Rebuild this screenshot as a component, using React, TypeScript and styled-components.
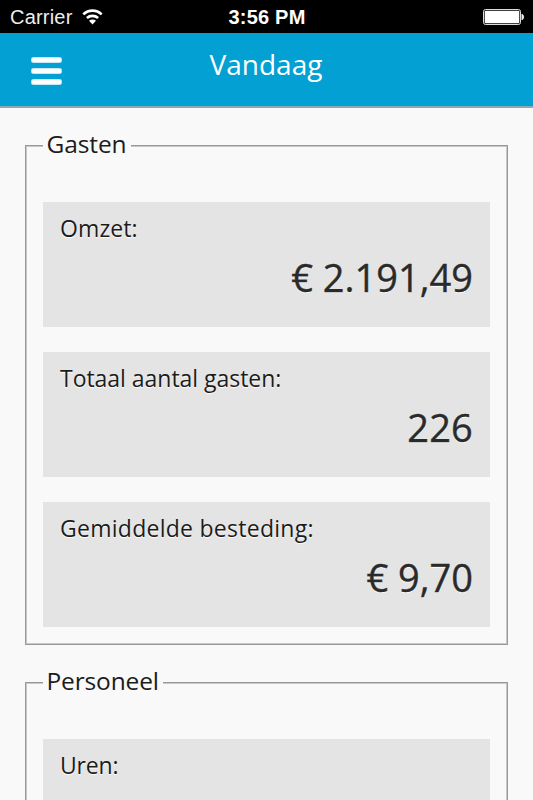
import React from "react";
import styled, { createGlobalStyle } from "styled-components";

const GlobalStyle = createGlobalStyle`
  * { box-sizing: border-box; }
  html, body { margin: 0; height: 100%; overflow: hidden; background: #f9f9f9; }
`;

const Screen = styled.div`
  width: 533px;
  height: 800px;
  overflow: hidden;
  background: #f9f9f9;
  color: #1c1c1c;
  font-family: "Open Sans", "Noto Sans", sans-serif;
`;

const StatusBar = styled.div`
  display: grid;
  grid-template-columns: 1fr auto 1fr;
  align-items: center;
  height: 33px;
  padding: 1px 9px 0 10px;
  background: #000;
  color: #fff;
  font: 20px/32px "Liberation Sans", Arial, sans-serif;
`;

const Carrier = styled.div`
  display: flex;
  align-items: center;
  gap: 9px;
  color: #eee;
  letter-spacing: 0.2px;
`;

const Clock = styled.div`
  font-weight: 700;
  font-size: 20px;
  letter-spacing: 0.2px;
`;

const Power = styled.div`
  display: flex;
  justify-content: flex-end;
`;

const Header = styled.header`
  display: grid;
  grid-template-columns: 80px 1fr 80px;
  height: 75px;
  padding: 0 1px 0 0;
  background: #02a0d3;
  border-bottom: 2px solid #8fa6b4;
`;

const MenuButton = styled.button`
  display: flex;
  flex-direction: column;
  gap: 5px;
  padding: 24px 0 0 31px;
  border: 0;
  background: none;
`;

const MenuLine = styled.span`
  width: 31px;
  height: 6px;
  border-radius: 3px;
  background: #fff;
  box-shadow: inset 0 0 1px 0.5px #8dd3ea;
`;

const Title = styled.h1`
  margin: 0;
  color: #fff;
  text-align: center;
  font-size: 28px;
  font-weight: 400;
  line-height: 62px;
`;

const Content = styled.main`
  display: flex;
  flex-direction: column;
  gap: 20px;
  padding: 20px 25px 0;
`;

const Group = styled.fieldset`
  min-width: 0;
  margin: 0;
  padding: 40px 17px 17px;
  border: 1px solid #999;
  box-shadow: inset 0 0 0 1px #c8c8c8;
`;

const Legend = styled.legend<{ $width: number; $spacing: number }>`
  width: ${(p) => p.$width}px;
  height: 34px;
  padding: 0 0 0 3.5px;
  background: #f9f9f9;
  font-size: 24.5px;
  line-height: 32px;
  white-space: nowrap;
  letter-spacing: ${(p) => p.$spacing}px;
`;

const Cards = styled.div`
  display: flex;
  flex-direction: column;
  gap: 25px;
`;

const Card = styled.section`
  height: 125px;
  padding: 9px 17px;
  background: #e4e4e4;
  text-shadow: 0 1px 1px #fff;
`;

const Label = styled.div<{ $spacing: number }>`
  height: 34px;
  font-size: 23px;
  line-height: 34px;
  white-space: nowrap;
  letter-spacing: ${(p) => p.$spacing}px;
`;

const Value = styled.div<{ $spacing: number }>`
  height: 64px;
  font-size: 38px;
  line-height: 64px;
  text-align: right;
  white-space: nowrap;
  color: #2a2a2a;
  -webkit-text-stroke: 0.4px #2a2a2a;
  letter-spacing: ${(p) => p.$spacing}px;
`;

const WifiIcon = () => (
  <svg width="21" height="16" viewBox="0 0 21 16">
    <path d="M1.3 5.4C6.6.3 14.4.3 19.7 5.4" fill="none" stroke="#fff" strokeWidth="2.6" />
    <path d="M4.9 9C8 6.2 13 6.2 16.1 9" fill="none" stroke="#fff" strokeWidth="2.6" />
    <path d="M7 11.8c2-1.800 5-1.800 7 0L10.500 15.500z" fill="#fff" />
  </svg>
);

const BatteryIcon = () => (
  <svg width="41" height="16" viewBox="0 0 41 16">
    <rect x=".5" y=".5" width="37" height="15" rx="2" fill="none" stroke="#ddd" />
    <rect x="1.700" y="1.700" width="34.600" height="12.600" rx=".8" fill="#fff" />
    <path d="M38.500 5h1q1.500 1 1.500 3t-1.500 3h-1z" fill="#eee" />
  </svg>
);

interface Item { label: string; value: string; labelSpacing: number; valueSpacing: number }
interface Section { title: string; width: number; spacing: number; items: Item[] }

const sections: Section[] = [
  {
    title: "Gasten", width: 88, spacing: -0.1,
    items: [
      { label: "Omzet:", value: "€ 2.191,49", labelSpacing: 0.1, valueSpacing: 0 },
      { label: "Totaal aantal gasten:", value: "226", labelSpacing: -0.03, valueSpacing: 0.2 },
      { label: "Gemiddelde besteding:", value: "€ 9,70", labelSpacing: 0.27, valueSpacing: 0 },
    ],
  },
  {
    title: "Personeel", width: 120, spacing: -0.15,
    items: [{ label: "Uren:", value: "", labelSpacing: -0.2, valueSpacing: 0 }],
  },
];

export default function App() {
  return (
    <Screen>
      <GlobalStyle />
      <StatusBar>
        <Carrier>Carrier<WifiIcon /></Carrier>
        <Clock>3:56 PM</Clock>
        <Power><BatteryIcon /></Power>
      </StatusBar>
      <Header>
        <MenuButton aria-label="Menu"><MenuLine /><MenuLine /><MenuLine /></MenuButton>
        <Title>Vandaag</Title>
      </Header>
      <Content>
        {sections.map((s) => (
          <Group key={s.title}>
            <Legend $width={s.width} $spacing={s.spacing}>{s.title}</Legend>
            <Cards>
              {s.items.map((i) => (
                <Card key={i.label}>
                  <Label $spacing={i.labelSpacing}>{i.label}</Label>
                  <Value $spacing={i.valueSpacing}>{i.value}</Value>
                </Card>
              ))}
            </Cards>
          </Group>
        ))}
      </Content>
    </Screen>
  );
}
